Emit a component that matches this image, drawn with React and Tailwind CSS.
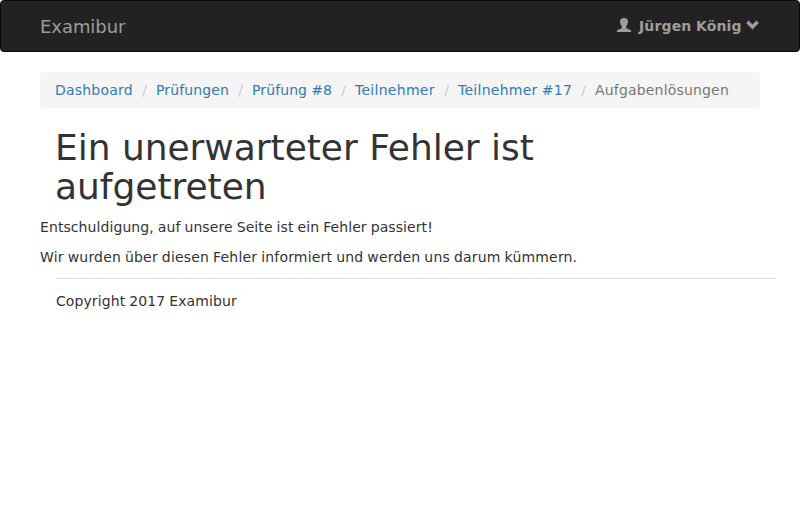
const crumbs = [
  { label: "Dashboard", item: "w-[101px]", text: "tracking-[0.2px]" },
  { label: "Prüfungen", item: "w-[96px]", text: "tracking-[0.12px]" },
  { label: "Prüfung #8", item: "w-[103px]", text: "tracking-[0.1px] [word-spacing:-0.5px]" },
  { label: "Teilnehmer", item: "w-[103px]", text: "tracking-[0.28px]" },
  { label: "Teilnehmer #17", item: "w-[137px]", text: "tracking-[0.27px] [word-spacing:-0.6px]" },
];

function UserIcon() {
  return (
    <svg className="-mt-[2px] h-[14px] w-[14px]" viewBox="0 0 14 14" fill="currentColor">
      <path d="M7 0C4.5 0 3 1.2 3 3.4c0 1.8.6 3.5 1.8 4.8v1.5c0 .4-.2.6-.6.8L.9 11.7C.2 12 0 12.4 0 13v1h14v-1c0-.6-.2-1-.9-1.3L9.8 10.5c-.4-.2-.6-.4-.6-.8V8.2C10.400 6.900 11 5.200 11 3.400 11 1.200 9.500 0 7 0z" />
    </svg>
  );
}

function ChevronDown() {
  return (
    <svg className="-mt-[2px] h-[14px] w-[14px]" viewBox="0 0 14 14" fill="currentColor">
      <path d="M6.500 11.500 .1 5.100 2.600 2.600 6.500 6.500 10.400 2.600 12.900 5.100z" />
    </svg>
  );
}

export default function App() {
  return (
    <div className="font-['DejaVu_Sans',sans-serif] text-[14px] leading-5 text-[#333]">
      <nav className="mb-5 flex h-[52px] items-center justify-between rounded border border-[#080808] bg-[#222] px-[39px] text-[#9d9d9d]">
        <a className="pt-[2px] text-[18px] leading-5 tracking-[-0.06px]">Examibur</a>
        <a className="flex w-[143px] items-center font-bold">
          <UserIcon />
          <span className="ml-2 flex-1 whitespace-nowrap tracking-[0.15px] [word-spacing:-0.5px]">Jürgen König</span>
          <ChevronDown />
        </a>
      </nav>
      <main className="px-10">
        <ol className="mb-5 flex h-9 items-center rounded bg-[#f5f5f5] px-[15px]">
          {crumbs.map(({ label, item, text }) => (
            <li key={label} className={`flex justify-between whitespace-nowrap ${item}`}>
              <a className={`text-[#337ab7] ${text}`}>{label}</a>
              <span className="pr-[9px] text-[#ccc]">/</span>
            </li>
          ))}
          <li className="tracking-[0.18px] text-[#777]">Aufgabenlösungen</li>
        </ol>
        <h1 className="mb-[11px] w-[540px] px-[15px] text-[36px] font-medium leading-[39px] tracking-[-0.03px]">
          Ein unerwarteter Fehler ist aufgetreten
        </h1>
        <p className="mb-[10px] tracking-[0.08px] [word-spacing:-0.5px]">
          Entschuldigung, auf unsere Seite ist ein Fehler passiert!
        </p>
        <p className="mb-[11px] tracking-[0.175px] [word-spacing:-0.6px]">
          Wir wurden über diesen Fehler informiert und werden uns darum kümmern.
        </p>
      </main>
      <footer className="ml-14 mr-6 border-t border-[#ddd] pt-3">
        <p className="tracking-[0.09px] [word-spacing:-0.5px]">Copyright 2017 Examibur</p>
      </footer>
    </div>
  );
}
